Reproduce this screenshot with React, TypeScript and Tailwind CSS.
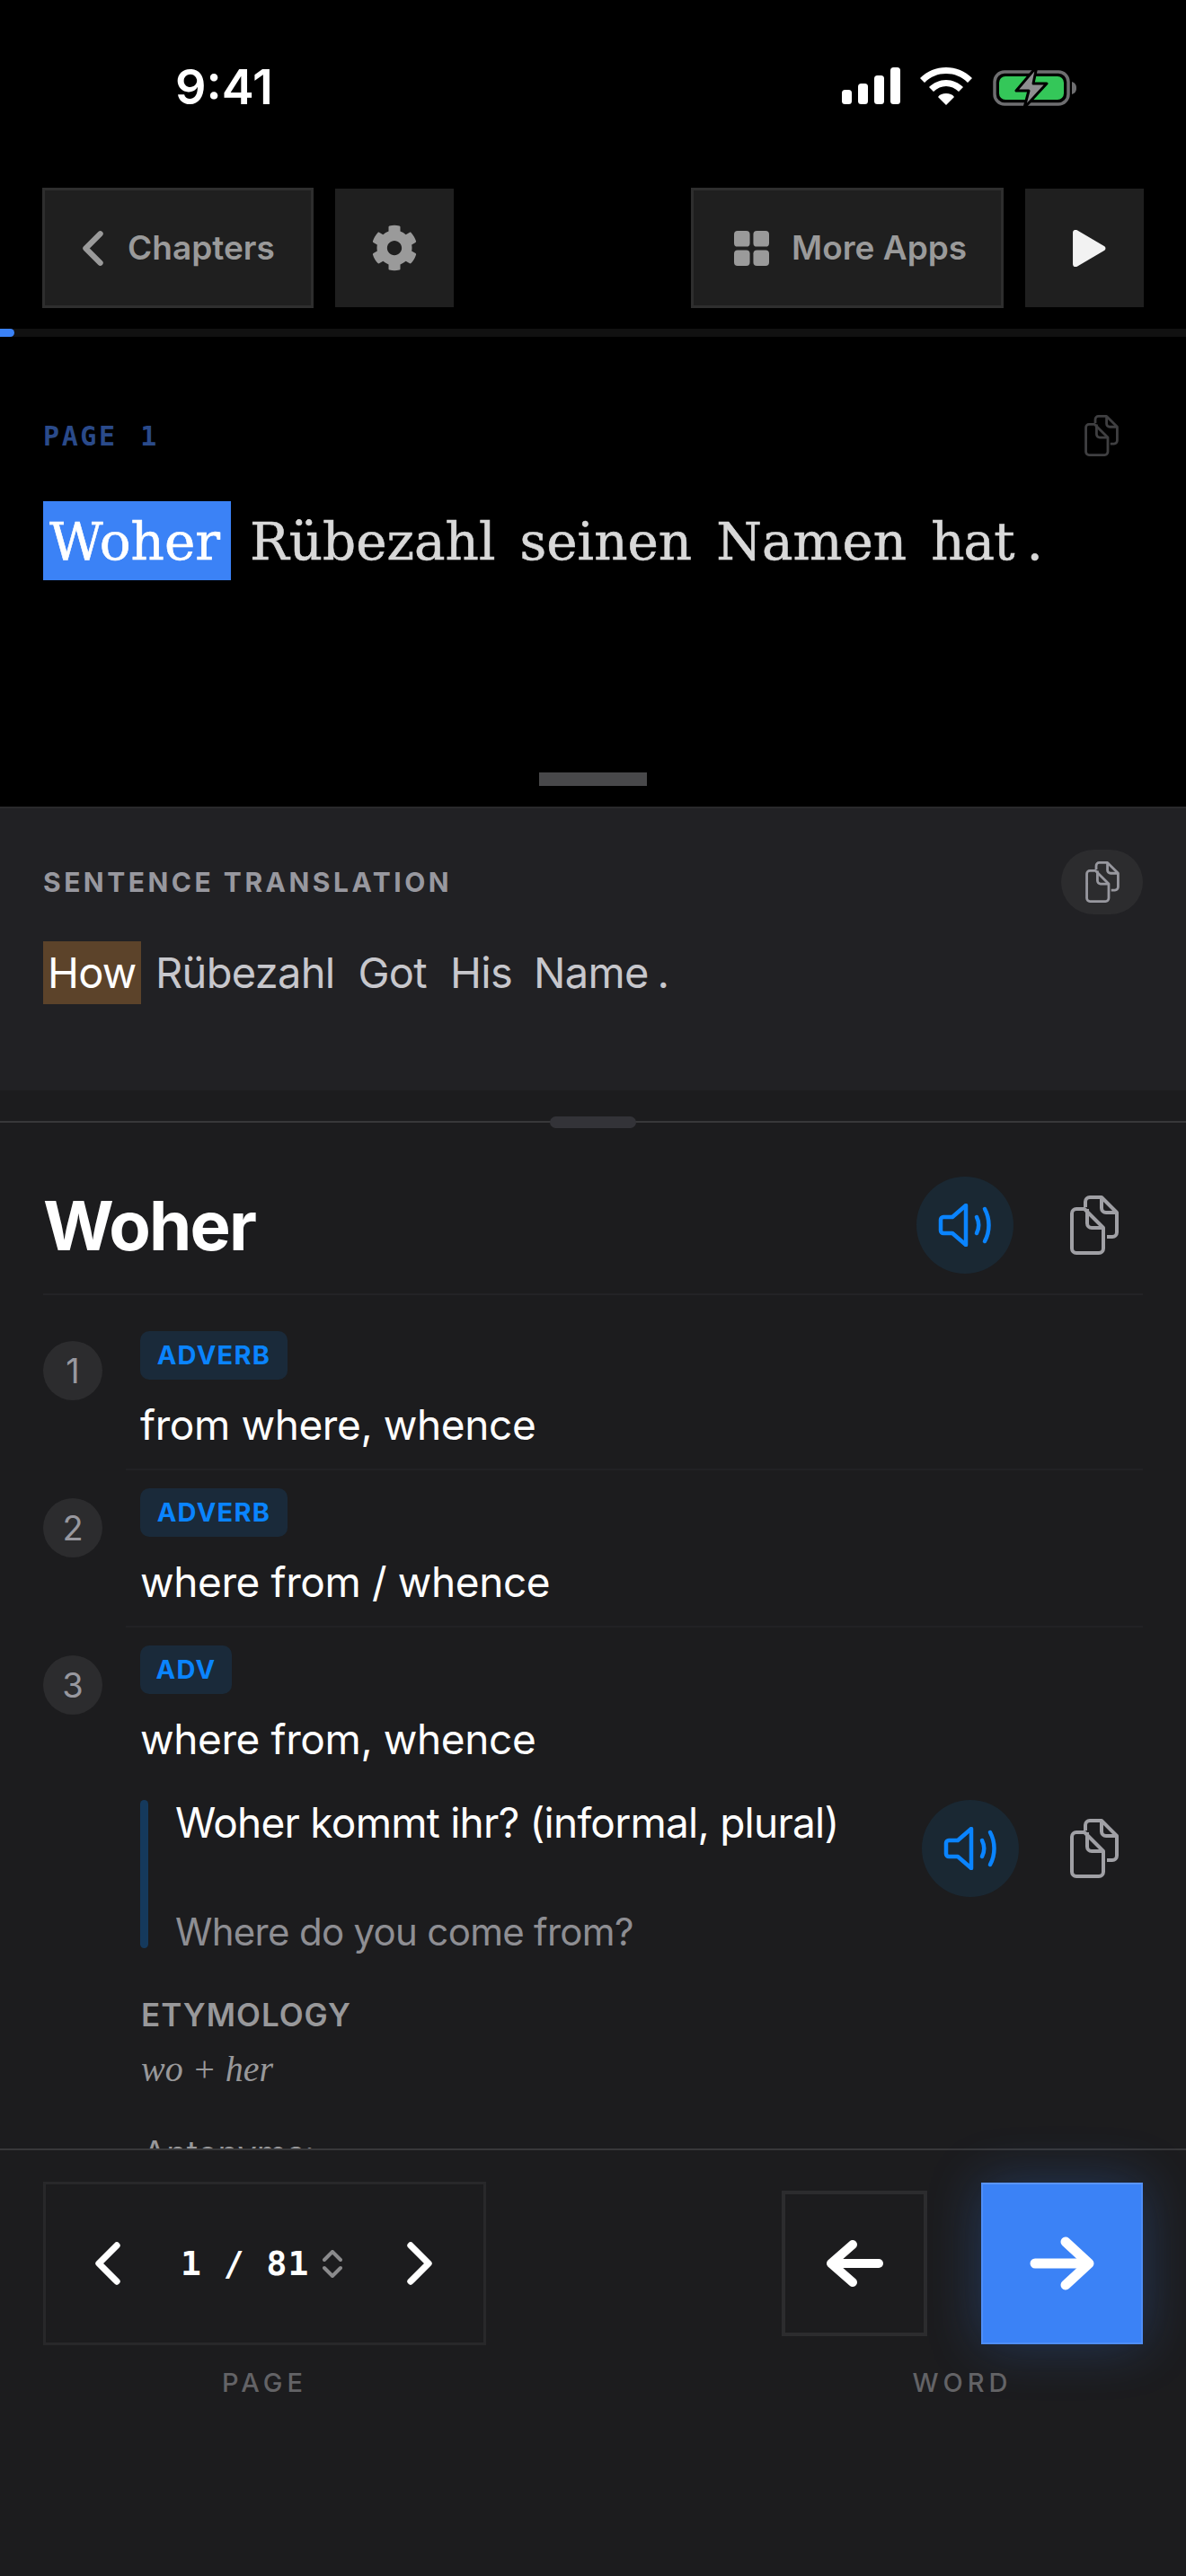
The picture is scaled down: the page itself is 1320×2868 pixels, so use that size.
import { ChevronLeft, ChevronRight } from "lucide-react"
import { FaCog } from "react-icons/fa"

const inter = "font-['Inter',sans-serif]"

function CopyIcon({ className }: { className: string }) {
    return (
        <svg viewBox="0 0 54 66" fill="none" stroke="currentColor" strokeWidth="4" strokeLinejoin="round" className={className}>
            <path d="M17 13V7a5 5 0 0 1 5-5h13l17 17v22a5 5 0 0 1-5 5h-6" />
            <path d="M35 2v12a5 5 0 0 0 5 5h12" />
            <path d="M7 15h9l21 21v23a5 5 0 0 1-5 5H7a5 5 0 0 1-5-5V20a5 5 0 0 1 5-5z" />
            <path d="M19 15v16a5 5 0 0 0 5 5h13" />
        </svg>
    )
}

function SpeakerIcon() {
    return (
        <svg viewBox="0 0 60 48" fill="none" stroke="#0a84ff" strokeWidth="4.5" strokeLinecap="round" strokeLinejoin="round" className="w-[60px] h-[48px]">
            <path d="M31 2v44L16 33H6a3 3 0 0 1-3-3V18a3 3 0 0 1 3-3h10z" />
            <path d="M43 15c3 6 3 12 0 18" />
            <path d="M52 6c6 11 6 25 0 36" />
        </svg>
    )
}

function Sense({ n, tag, tagWidth, text, last }: { n: number; tag: string; tagWidth: string; text: string; last?: boolean }) {
    return (
        <div className="flex">
            <div className={`w-[66px] h-[66px] mt-[11px] rounded-full bg-[#2c2c2e] flex items-center justify-center text-[38px] text-[#98989f] ${inter}`}>{n}</div>
            <div className={`ml-[42px] flex-1 ${last ? "" : "h-[154px]"}`}>
                <div className={`h-[54px] ${tagWidth} rounded-[10px] bg-[#1a2a3a] flex items-center justify-center text-[29px] font-bold tracking-[1.3px] text-[#0a84ff] ${inter}`}>{tag}</div>
                <div className={`mt-[18px] text-[46px] leading-[64px] tracking-[-0.4px] text-white ${inter}`}>{text}</div>
            </div>
        </div>
    )
}

export default function App() {
    return (
        <div className={`w-[1320px] h-[2868px] bg-[#1c1c1e] flex flex-col overflow-hidden ${inter}`}>

            {/* top area */}
            <div className="h-[898px] bg-black flex flex-col">
                <div className="h-[209px] pt-[70px] pl-[195px] pr-[122px] flex items-start justify-between">
                    <span className="text-[54px] leading-[54px] font-semibold text-white">9:41</span>
                    <div className="flex items-start gap-[22px] pt-[5px]">
                        <svg viewBox="0 0 65 41" className="w-[65px] h-[41px]" fill="white">
                            <rect x="0" y="25" width="11" height="16" rx="3.5" />
                            <rect x="18" y="18" width="11" height="23" rx="3.5" />
                            <rect x="36" y="9" width="11" height="32" rx="3.5" />
                            <rect x="54" y="0" width="11" height="41" rx="3.5" />
                        </svg>
                        <svg viewBox="0 0 58 42" className="w-[58px] h-[42px]" fill="white">
                            <path d="M29 0C18 0 8 4 0 12l5 5C12 10 20 7 29 7s17 3 24 10l5-5C50 4 40 0 29 0z" />
                            <path d="M29 14c-7 0-14 3-19 8l5 5c4-4 9-6 14-6s10 2 14 6l5-5c-5-5-12-8-19-8z" />
                            <path d="M29 29c-4 0-7 1-9 4l9 9 9-9c-2-3-5-4-9-4z" />
                        </svg>
                        <svg viewBox="0 0 93 46" className="w-[93px] h-[46px] ml-[1px] -mt-[1px]">
                            <rect x="2" y="6" width="82" height="36" rx="11" fill="none" stroke="#6e6e70" strokeWidth="3.5" />
                            <rect x="7" y="11" width="72" height="26" rx="7" fill="#34c759" />
                            <path d="M88 17c3 1 5 3 5 7s-2 6-5 7z" fill="#6e6e70" />
                            <path d="M49 0 L26 27 H40 L35 46 L60 19 H45 z" fill="#8e8e90" stroke="#000" strokeWidth="3" strokeLinejoin="round" />
                        </svg>
                    </div>
                </div>

                <div className="h-[134px] px-[47px] flex items-center justify-between">
                    <div className="flex items-center gap-[24px]">
                        <div className="w-[302px] h-[134px] bg-[#1f1f1f] border-[3px] border-[#2e2e2e] flex items-center pl-[21px] text-[#9a9a9a]">
                            <ChevronLeft size={65} strokeWidth={2.3} />
                            <span className="ml-[6px] text-[37px] font-semibold">Chapters</span>
                        </div>
                        <div className="w-[132px] h-[132px] bg-[#1f1f1f] flex items-center justify-center text-[#9a9a9a]">
                            <FaCog size={52} />
                        </div>
                    </div>
                    <div className="flex items-center gap-[24px]">
                        <div className="w-[348px] h-[134px] bg-[#1f1f1f] border-[3px] border-[#2e2e2e] flex items-center pl-[45px] text-[#9a9a9a]">
                            <svg viewBox="0 0 40 40" className="w-[39px] h-[39px]" fill="currentColor">
                                <rect x="0" y="0" width="18" height="18" rx="4" />
                                <rect x="22" y="0" width="18" height="18" rx="4" />
                                <rect x="0" y="22" width="18" height="18" rx="4" />
                                <rect x="22" y="22" width="18" height="18" rx="4" />
                            </svg>
                            <span className="ml-[25px] text-[37px] font-semibold">More Apps</span>
                        </div>
                        <div className="w-[132px] h-[132px] bg-[#1f1f1f] flex items-center justify-center">
                            <svg viewBox="0 0 36 40" className="ml-[10px] w-[37px] h-[41px]" fill="#f2f2f2">
                                <path d="M0 3c0-3 3-4 5-2.500l29 17c2 1 2 4 0 5l-29 17c-2 1.500-5 .5-5-2.500z" />
                            </svg>
                        </div>
                    </div>
                </div>

                <div className="mt-[23px] h-[9px] bg-[#111111]">
                    <div className="w-[16px] h-[9px] bg-[#3b82f6] rounded-r-full"></div>
                </div>

                <div className="pl-[48px] pr-[75px] mt-[87px] h-[45px] flex items-center justify-between">
                    <span className="mt-[2px] text-[30px] font-bold tracking-[2.6px] whitespace-pre text-[#2a4a8a] font-['DejaVu_Sans_Mono',monospace]">PAGE <span className="ml-[5px]">1</span></span>
                    <CopyIcon className="w-[38px] h-[46px] text-[#3f3f41]" />
                </div>

                <div className="pl-[48px] mt-[51px] h-[88px] flex items-start text-[58px] leading-[90px] text-[#d8d8d8] [-webkit-text-stroke:0.6px_currentColor] font-['DejaVu_Serif',serif]">
                    <span className="h-[88px] w-[209px] bg-[#3b82f6] text-white pl-[7px]">Woher</span>
                    <span className="ml-[21px]">Rübezahl</span>
                    <span className="ml-[27px]">seinen</span>
                    <span className="ml-[27px]">Namen</span>
                    <span className="ml-[27px] tracking-[-1px]">hat</span>
                    <span className="ml-[14px]">.</span>
                </div>

                <div className="mt-[214px] mx-auto w-[120px] h-[15px] bg-[#48484a]"></div>
            </div>

            {/* sentence translation */}
            <div className="h-[316px] bg-[#212124] border-t-[2px] border-[#2a2a2c] px-[48px] flex flex-col">
                <div className="mt-[46px] h-[72px] flex items-center justify-between">
                    <span className="text-[30px] font-bold tracking-[3.5px] text-[#98989f]">SENTENCE TRANSLATION</span>
                    <div className="w-[91px] h-[72px] rounded-full bg-[#2c2c2e] flex items-center justify-center">
                        <CopyIcon className="w-[38px] h-[46px] text-[#98989f]" />
                    </div>
                </div>
                <div className="mt-[30px] flex items-center text-[47px] leading-[70px] tracking-[-0.7px] text-[#c7c7cc]">
                    <span className="w-[109px] h-[70px] bg-[#5c432a] text-white pl-[5px]">How</span>
                    <span className="ml-[16px]">Rübezahl</span>
                    <span className="ml-[26px]">Got</span>
                    <span className="ml-[26px]">His</span>
                    <span className="ml-[24px]">Name</span>
                    <span className="ml-[10px]">.</span>
                </div>
            </div>

            {/* word details */}
            <div className="h-[36px] relative border-b-[2px] border-[#38383a]">
                <div className="absolute left-[612px] top-[29px] w-[96px] h-[13px] rounded-full bg-[#333338]"></div>
            </div>

            <div className="h-[1142px] px-[48px] overflow-hidden">
                <div className="h-[192px] border-b-[2px] border-[#232326] pt-[60px]">
                    <div className="h-[108px] flex items-center justify-between">
                        <span className="text-[76px] font-bold text-white tracking-[-1.8px]">Woher</span>
                        <div className="flex items-center">
                            <div className="w-[108px] h-[108px] rounded-full bg-[#1a2833] flex items-center justify-center">
                                <SpeakerIcon />
                            </div>
                            <CopyIcon className="ml-[63px] mr-[27px] w-[54px] h-[66px] text-[#a0a0a5]" />
                        </div>
                    </div>
                </div>

                <div className="pt-[40px]">
                    <Sense n={1} tag="ADVERB" tagWidth="w-[164px]" text="from where, whence" />
                    <div className="ml-[92px] -mt-[1px] border-t-[2px] border-[#212124] h-[22px]"></div>
                    <Sense n={2} tag="ADVERB" tagWidth="w-[164px]" text="where from / whence" />
                    <div className="ml-[92px] -mt-[1px] border-t-[2px] border-[#212124] h-[22px]"></div>
                    <Sense n={3} tag="ADV" tagWidth="w-[102px]" text="where from, whence" last />

                    <div className="ml-[108px] mt-[36px] flex justify-between">
                        <div className="h-[165px] w-[9px] rounded-full bg-[#15395c]"></div>
                        <div className="ml-[30px] -mt-[5px] flex-1">
                            <div className="text-[46px] leading-[60px] tracking-[-0.75px] text-white">Woher kommt ihr? (informal, plural)</div>
                            <div className="mt-[65px] text-[42px] leading-[54px] tracking-[-0.7px] text-[#8e8e93]">Where do you come from?</div>
                        </div>
                        <div className="flex items-start">
                            <div className="w-[108px] h-[108px] rounded-full bg-[#1a2833] flex items-center justify-center">
                                <SpeakerIcon />
                            </div>
                            <CopyIcon className="mt-[21px] ml-[57px] mr-[27px] w-[54px] h-[66px] text-[#a0a0a5]" />
                        </div>
                    </div>

                    <div className="ml-[109px] mt-[43px] text-[35px] leading-[44px] font-semibold tracking-[1px] text-[#98989a]">ETYMOLOGY</div>
                    <div className="ml-[109px] mt-[14px] text-[40px] leading-[50px] italic text-[#98989a] font-['Liberation_Serif',serif]">wo + her</div>
                    <div className="ml-[111px] mt-[46px] text-[38px] leading-[44px] text-[#98989a]">Antonyms:</div>
                </div>
            </div>

            {/* bottom navigation */}
            <div className="flex-1 bg-[#1c1c1e] border-t-[2px] border-[#38383a] px-[48px] pt-[35px] relative">
                <div className="flex items-start justify-between">
                    <div className="w-[493px]">
                        <div className="h-[182px] border-[3px] border-[#28282a] flex items-center text-white">
                            <ChevronLeft size={80} strokeWidth={2.2} className="ml-[29px]" />
                            <span className="ml-[41px] whitespace-pre text-[38px] font-bold tracking-[1px] font-['DejaVu_Sans_Mono',monospace]">1 / 81</span>
                            <svg viewBox="0 0 22 31" fill="none" stroke="#8a8a8c" strokeWidth="4" strokeLinecap="round" strokeLinejoin="round" className="ml-[15px] w-[22px] h-[31px]">
                                <path d="M2 11l9-9 9 9" />
                                <path d="M2 20l9 9 9-9" />
                            </svg>
                            <ChevronRight size={80} strokeWidth={2.2} className="ml-[46px]" />
                        </div>
                        <div className="mt-[27px] text-center text-[29px] leading-[30px] font-medium tracking-[5px] text-[#636366]">PAGE</div>
                    </div>
                    <div className="w-[402px]">
                        <div className="h-[182px] flex items-center justify-between">
                            <div className="w-[162px] h-[162px] border-[4px] border-[#2c2c2e] flex items-center justify-center text-white">
                                <svg viewBox="0 0 64 52" fill="none" stroke="currentColor" strokeWidth="10" strokeLinecap="round" strokeLinejoin="round" className="w-[64px] h-[52px]">
                                    <path d="M30 5L6 26l24 21" />
                                    <path d="M8 26h51" />
                                </svg>
                            </div>
                            <div className="w-[180px] h-[180px] bg-[#3b82f6] border-[2px] border-[#4f8ef7] border-t-[#5a95f8] shadow-[0_0_60px_rgba(59,130,246,0.28)] flex items-center justify-center text-white">
                                <svg viewBox="0 0 72 60" fill="none" stroke="currentColor" strokeWidth="11" strokeLinecap="round" strokeLinejoin="round" className="w-[72px] h-[60px]">
                                    <path d="M40 6l26 24-26 24" />
                                    <path d="M6 30h58" />
                                </svg>
                            </div>
                        </div>
                        <div className="mt-[27px] text-center text-[29px] leading-[30px] font-medium tracking-[5px] text-[#636366]">WORD</div>
                    </div>
                </div>
            </div>

        </div>
    )
}
